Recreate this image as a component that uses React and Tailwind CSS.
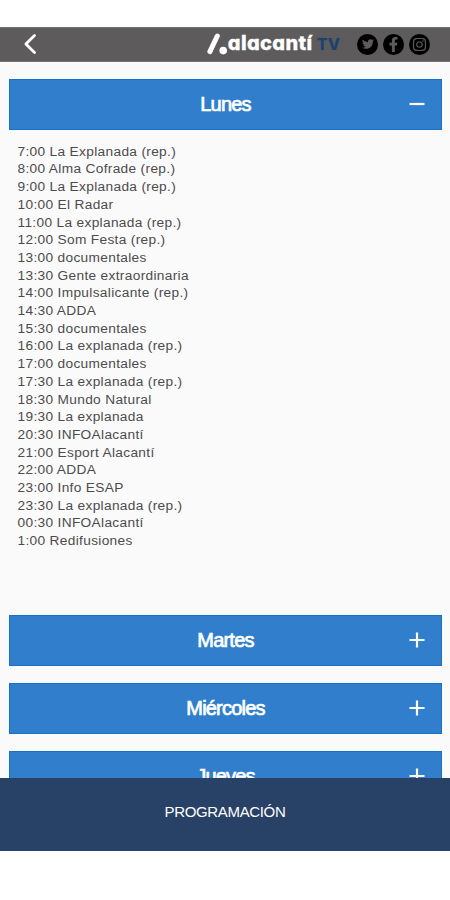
import { useState } from 'react';
import { FaFacebookF, FaInstagram, FaTwitter } from 'react-icons/fa';

const LUNES = [
  '7:00 La Explanada (rep.)',
  '8:00 Alma Cofrade (rep.)',
  '9:00 La Explanada (rep.)',
  '10:00 El Radar',
  '11:00 La explanada (rep.)',
  '12:00 Som Festa (rep.)',
  '13:00 documentales',
  '13:30 Gente extraordinaria',
  '14:00 Impulsalicante (rep.)',
  '14:30 ADDA',
  '15:30 documentales',
  '16:00 La explanada (rep.)',
  '17:00 documentales',
  '17:30 La explanada (rep.)',
  '18:30 Mundo Natural',
  '19:30 La explanada',
  '20:30 INFOAlacantí',
  '21:00 Esport Alacantí',
  '22:00 ADDA',
  '23:00 Info ESAP',
  '23:30 La explanada (rep.)',
  '00:30 INFOAlacantí',
  '1:00 Redifusiones',
];

const DAYS = [
  { name: 'Lunes', shows: LUNES },
  { name: 'Martes', shows: [] },
  { name: 'Miércoles', shows: [] },
  { name: 'Jueves', shows: [] },
];

const SOCIAL = [
  { label: 'Twitter', Icon: FaTwitter, size: 12 },
  { label: 'Facebook', Icon: FaFacebookF, size: 15 },
  { label: 'Instagram', Icon: FaInstagram, size: 15 },
];

function Logo() {
  return (
    <div className="flex items-center h-full">
      <svg width="21" height="22" viewBox="0 0 21 22" className="shrink-0" aria-hidden="true">
        <path d="M2.9 18.6 10.3 3" stroke="#fff" strokeWidth="5" strokeLinecap="round" />
        <circle cx="16.2" cy="17.6" r="3.8" fill="#fff" />
      </svg>
      <span className="mt-[-2px] w-[89px] whitespace-nowrap font-['Inter',sans-serif] text-[20px] leading-none font-extrabold tracking-[0.35px] text-white [-webkit-text-stroke:0.3px_white] [font-feature-settings:'cv11']">
        alacantí
      </span>
      <span className="font-['Inter',sans-serif] text-[16px] leading-none font-extrabold text-[#1d4170]">
        TV
      </span>
    </div>
  );
}

function Header() {
  return (
    <header className="flex h-[35px] shrink-0 items-center bg-[#5d5b5c] border-y border-[#747273] pb-[1px]">
      <button type="button" aria-label="Volver" className="ml-[23px]">
        <svg width="14" height="22" viewBox="0 0 14 22" fill="none">
          <path d="M11.5 2.5 2.9 11l8.6 8.5" stroke="#fff" strokeWidth="2.8" strokeLinecap="round" strokeLinejoin="round" />
        </svg>
      </button>
      <div className="ml-auto h-full">
        <Logo />
      </div>
      <div className="ml-[17px] mr-[20px] flex gap-[5px]">
        {SOCIAL.map(({ label, Icon, size }) => (
          <span
            key={label}
            title={label}
            className="flex size-[21px] items-center justify-center rounded-full bg-black text-[#5d5b5c]"
          >
            <Icon size={size} />
          </span>
        ))}
      </div>
    </header>
  );
}

function DayPanel({ day, open, onToggle }) {
  return (
    <section>
      <button
        type="button"
        onClick={onToggle}
        className="grid h-[50.7px] w-full grid-cols-[1fr_auto_1fr] items-center border border-[#1672c4] bg-[#317fcc] pb-[0.7px] text-white"
      >
        <span className="col-start-2 text-[20px] leading-none tracking-[-0.8px] [-webkit-text-stroke:0.7px_white]">
          {day.name}
        </span>
        <svg className="mr-[16px] justify-self-end" width="16" height="16" viewBox="0 0 16 16">
          <path d={open ? 'M.5 8h15' : 'M.5 8h15M8 .5v15'} stroke="#fff" strokeWidth="2.2" />
        </svg>
      </button>
      {open && (
        <ul className="h-[468.6px] pl-[8.5px] pt-[13px] text-[13.7px] leading-[17.7px] tracking-[0.33px] text-[#4c4c4c]">
          {day.shows.map((show) => (
            <li key={show}>{show}</li>
          ))}
        </ul>
      )}
    </section>
  );
}

export default function App() {
  const [openDay, setOpenDay] = useState('Lunes');

  return (
    <div className="flex h-[900px] w-[450px] flex-col overflow-hidden bg-white pb-[49px] pt-[27px] font-['Liberation_Sans',Arial,sans-serif]">
      <Header />
      <main className="flex min-h-0 flex-1 flex-col gap-[17px] overflow-hidden bg-[#fafafa] pl-[9px] pr-[8px] pt-[17px]">
        {DAYS.map((day) => (
          <DayPanel
            key={day.name}
            day={day}
            open={openDay === day.name}
            onToggle={() => setOpenDay(openDay === day.name ? '' : day.name)}
          />
        ))}
      </main>
      <footer className="flex h-[73px] shrink-0 justify-center bg-[#284166] pt-[25px] text-[15px] leading-[18px] tracking-[-0.35px] text-white">
        PROGRAMACIÓN
      </footer>
    </div>
  );
}
